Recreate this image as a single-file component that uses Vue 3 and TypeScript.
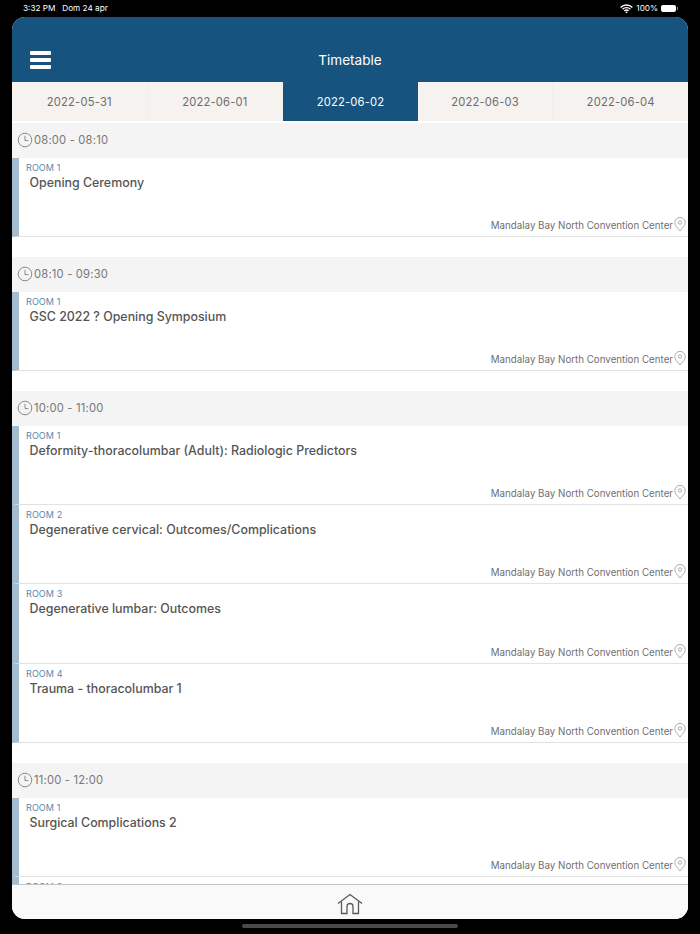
<template>
  <div class="device">
    <div class="status-bar">
      <span class="status-time">3:32 PM&nbsp;&nbsp;&nbsp;Dom 24 apr</span>
      <div class="status-right">
        <svg class="wifi" width="13" height="10" viewBox="0 0 13 10">
          <path d="M0.6 3.4a8.4 8.4 0 0 1 11.8 0M2.5 5.3a5.7 5.7 0 0 1 8 0M4.4 7.1a3 3 0 0 1 4.2 0" fill="none" stroke="#fff" stroke-width="1.4" />
          <path d="M5.3 8.1a1.7 1.7 0 0 1 2.4 0L6.5 9.4z" fill="#fff" />
        </svg>
        <span>100%</span>
        <span class="battery"><span class="battery-fill"></span></span>
      </div>
    </div>

    <div class="screen">
      <header class="top-bar">
        <button class="menu-button" aria-label="Menu">
          <span></span><span></span><span></span>
        </button>
        <h1>Timetable</h1>
      </header>

      <nav class="tabs">
        <div
          v-for="day in days"
          :key="day"
          class="tab"
          :class="{ active: day === activeDay }"
        >
          {{ day }}
        </div>
      </nav>

      <main class="list">
        <section v-for="slot in slots" :key="slot.time" class="slot">
          <div class="slot-time">
            <svg width="16" height="16" viewBox="0 0 16 16" fill="none" stroke="#8a8a8a" stroke-width="1">
              <circle cx="8" cy="8" r="6.8" />
              <path d="M8 3.8V8.6H11.4" />
            </svg>
            <span>{{ slot.time }}</span>
          </div>
          <article v-for="item in slot.items" :key="item.room" class="session">
            <div class="session-room">{{ item.room }}</div>
            <template v-if="item.title">
              <div class="session-title">{{ item.title }}</div>
              <div class="session-place">
                <span>{{ place }}</span>
                <svg width="12" height="15" viewBox="0 0 12 15" fill="none" stroke="#a3a3a3" stroke-width="0.9">
                  <path d="M6 14C3.6 10.9 0.8 8.6 0.8 5.6a5.2 5.2 0 0 1 10.4 0C11.2 8.6 8.4 10.9 6 14Z" />
                  <circle cx="6" cy="5.5" r="1.7" />
                </svg>
              </div>
            </template>
          </article>
        </section>
      </main>

      <footer class="bottom-bar">
        <svg width="26" height="22" viewBox="0 0 26 22" fill="none" stroke="#5a5a5a" stroke-width="1.3">
          <path d="M1 10.5L13 1.5L25 10.5" />
          <path d="M4.5 8.5V20.5H10V13.5A3 3 0 0 1 16 13.5V20.5H21.5V8.5" />
        </svg>
      </footer>
    </div>

    <div class="home-indicator"></div>
  </div>
</template>

<script setup lang="ts">
interface Session {
  room: string
  title?: string
}

interface Slot {
  time: string
  items: Session[]
}

const days = ['2022-05-31', '2022-06-01', '2022-06-02', '2022-06-03', '2022-06-04']
const activeDay = '2022-06-02'
const place = 'Mandalay Bay North Convention Center'

const slots: Slot[] = [
  { time: '08:00 - 08:10', items: [{ room: 'ROOM 1', title: 'Opening Ceremony' }] },
  { time: '08:10 - 09:30', items: [{ room: 'ROOM 1', title: 'GSC 2022 ? Opening Symposium' }] },
  {
    time: '10:00 - 11:00',
    items: [
      { room: 'ROOM 1', title: 'Deformity-thoracolumbar (Adult): Radiologic Predictors' },
      { room: 'ROOM 2', title: 'Degenerative cervical: Outcomes/Complications' },
      { room: 'ROOM 3', title: 'Degenerative lumbar: Outcomes' },
      { room: 'ROOM 4', title: 'Trauma - thoracolumbar 1' }
    ]
  },
  {
    time: '11:00 - 12:00',
    items: [
      { room: 'ROOM 1', title: 'Surgical Complications 2' },
      // la riga successiva si vede appena sopra la barra in basso
      { room: 'ROOM 2' }
    ]
  }
]
</script>

<style>
html,
body {
  margin: 0;
  background: #000;
}
</style>

<style scoped>
.device {
  width: 700px;
  height: 934px;
  background: #000;
  display: flex;
  flex-direction: column;
  font-family: Inter, "Liberation Sans", sans-serif;
  overflow: hidden;
}

.status-bar {
  height: 17px;
  flex: none;
  display: flex;
  justify-content: space-between;
  align-items: flex-start;
  padding: 3px 24px 0 23px;
  box-sizing: border-box;
  color: #fff;
  font-size: 8.2px;
  line-height: 11px;
}

.status-right {
  display: flex;
  align-items: center;
  gap: 3px;
}

.battery {
  width: 15px;
  height: 7px;
  border-radius: 2px;
  background: #fff;
  display: block;
  position: relative;
}

.battery-fill {
  position: absolute;
  right: -2px;
  top: 2px;
  width: 1px;
  height: 3px;
  background: #888;
}

.screen {
  flex: none;
  height: 902px;
  margin: 0 12px;
  background: #fff;
  border-radius: 13px;
  overflow: hidden;
  display: flex;
  flex-direction: column;
}

.top-bar {
  height: 65px;
  flex: none;
  background: #16547f;
  color: #fff;
  display: flex;
  align-items: center;
  justify-content: center;
  position: relative;
  box-sizing: border-box;
  padding-top: 20px;
}

.top-bar h1 {
  margin: 0;
  font-size: 13.6px;
  font-weight: 400;
}

.menu-button {
  position: absolute;
  left: 18px;
  top: 34px;
  width: 21px;
  height: 18px;
  padding: 0;
  border: none;
  background: none;
  display: flex;
  flex-direction: column;
  justify-content: space-between;
}

.menu-button span {
  display: block;
  height: 4px;
  background: #fff;
  border-radius: 1px;
}

.tabs {
  height: 39px;
  flex: none;
  display: flex;
  background: #f5f2f0;
}

.tab {
  flex: 1;
  display: flex;
  align-items: center;
  justify-content: center;
  font-size: 11.2px;
  letter-spacing: 0.2px;
  color: #6d6d6d;
  border-right: 1px solid #f1eeec;
}

.tab:last-child {
  border-right: none;
}

.tab.active {
  background: #16547f;
  color: #fff;
  border-right: none;
}

.list {
  flex: 1;
  min-height: 0;
  overflow: hidden;
  padding-top: 2px;
  background: #fff;
}

.slot {
  margin-bottom: 20px;
}

.slot-time {
  height: 34.67px;
  box-sizing: border-box;
  background: #f4f4f4;
  display: flex;
  align-items: center;
  gap: 1px;
  padding: 0 0 1px 5px;
  color: #777;
  font-size: 11.2px;
  letter-spacing: 0.2px;
}

.session {
  height: 79.33px;
  box-sizing: border-box;
  border-left: 7px solid #a3bccf;
  border-bottom: 1px solid #e2e2e2;
  padding: 4px 2px 0 7px;
  display: flex;
  flex-direction: column;
}

.session-room {
  font-size: 9px;
  line-height: 11px;
  color: #5689ae;
  letter-spacing: 0.1px;
}

.session-title {
  margin-top: 1px;
  font-size: 12.4px;
  line-height: 17px;
  padding-left: 3.5px;
  font-weight: 550;
  color: #555;
}

.session-place {
  margin-top: auto;
  display: flex;
  align-items: flex-end;
  justify-content: flex-end;
  gap: 1px;
  padding-bottom: 4px;
  font-size: 9.75px;
  line-height: 13px;
  color: #6f6f6f;
}

.bottom-bar {
  height: 35px;
  flex: none;
  box-sizing: border-box;
  background: #f9f9f9;
  border-top: 1px solid #c4c4c4;
  display: flex;
  align-items: center;
  justify-content: center;
  padding-top: 4px;
}

.home-indicator {
  width: 216px;
  height: 4px;
  margin: 5px auto 0;
  border-radius: 2px;
  background: #4a4a4a;
}
</style>
